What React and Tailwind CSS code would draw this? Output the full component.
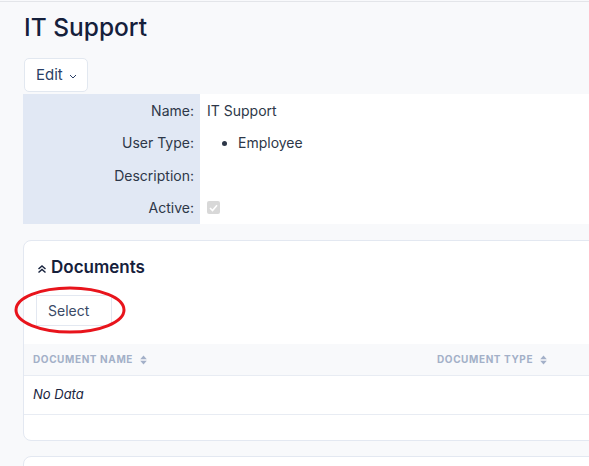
import React from "react";

function SortIcon() {
  return (
    <svg width="7" height="10" viewBox="0 0 7 10" className="inline-block ml-[7px] -mt-px">
      <path d="M3.5 0.5 L6.8 4.2 H0.2 Z" fill="currentColor" />
      <path d="M3.5 9.5 L6.8 5.8 H0.2 Z" fill="currentColor" />
    </svg>
  );
}

function DetailRow({ label, children }) {
  return (
    <div className="flex h-[32.5px]">
      <div className="w-[177px] shrink-0 bg-[#e1e8f4] flex items-center justify-end pr-[6px] text-[#2d3748]">
        {label}:
      </div>
      <div className="flex-1 bg-white flex items-center pl-[7px] text-[#2d3748]">
        {children}
      </div>
    </div>
  );
}

export default function App() {
  return (
    <div
      className="w-[589px] h-[466px] overflow-hidden bg-[#f8f9fb] pt-px text-[14px]"
      style={{ fontFamily: "Inter, 'Noto Sans', sans-serif" }}
    >
      <div className="w-[800px] pl-[23px] border-t border-[#e3e5e9]">
        <h1 className="pl-px pt-[9px] text-[24.5px] leading-[32px] font-medium text-[#15203b]">
          IT Support
        </h1>

        <button className="mt-[15px] ml-px h-[34px] w-[64px] rounded-[5px] border border-[#e2e8f0] bg-white text-[15px] text-[#2a3f66] flex items-center pl-[11px]">
          Edit
          <svg width="8" height="5" viewBox="0 0 8 5" className="ml-[6px] mt-[2px]">
            <path d="M1 1 L4 4 L7 1" stroke="#2a3f66" strokeWidth="1" fill="none" />
          </svg>
        </button>

        <div className="mt-[2px]">
          <DetailRow label="Name">IT Support</DetailRow>
          <DetailRow label="User Type">
            <ul className="list-disc pl-[31px]">
              <li>Employee</li>
            </ul>
          </DetailRow>
          <DetailRow label="Description" />
          <DetailRow label="Active">
            <span className="w-[13px] h-[13px] rounded-[2px] bg-[#d8d8d8] flex items-center justify-center">
              <svg width="9" height="8" viewBox="0 0 9 8">
                <path d="M1 4 L3.5 6.5 L8 1.2" stroke="white" strokeWidth="1.6" fill="none" />
              </svg>
            </span>
          </DetailRow>
        </div>

        <div className="relative mt-[16px] h-[201px] rounded-[8px] border border-[#e3e8f1] bg-white">
          <div className="flex items-center pl-[13px] pt-[16px]">
            <svg width="10" height="10" viewBox="0 0 10 10" className="mt-[3px] mr-[4px]">
              <path d="M1.5 5 L5 2 L8.5 5" stroke="#1a2540" strokeWidth="1.5" fill="none" />
              <path d="M1.5 8.5 L5 5.5 L8.5 8.5" stroke="#1a2540" strokeWidth="1.5" fill="none" />
            </svg>
            <h2 className="text-[17px] leading-[20px] font-semibold text-[#15203b]">Documents</h2>
          </div>

          <button className="mt-[18px] ml-[12px] h-[31px] w-[76px] border border-[#e3e8f1] bg-white text-[14px] text-[#3a4a66] text-left pl-[11px]">
            Select
          </button>

          <svg
            width="116"
            height="50"
            viewBox="0 0 116 50"
            className="absolute left-[-11px] top-[44px] pointer-events-none"
          >
            <ellipse cx="57" cy="25" rx="54" ry="22" stroke="#e8141c" strokeWidth="3" fill="none" />
          </svg>

          <div className="mt-[18px] h-[32px] bg-[#f8f9fb] border-b border-[#e8ecf3] flex items-center text-[10px] font-bold tracking-[0.06em] text-[#a3b0c8]">
            <div className="w-[413px] pl-[9px]">
              DOCUMENT NAME
              <SortIcon />
            </div>
            <div>
              DOCUMENT TYPE
              <SortIcon />
            </div>
          </div>
          <div className="h-[39px] border-b border-[#e8ecf3] flex items-center pl-[9px] text-[13px] italic text-[#1a2540]">
            No Data
          </div>
        </div>

        <div className="mt-[15px] h-[40px] rounded-[8px] border border-[#e3e8f1] bg-white" />
      </div>
    </div>
  );
}
